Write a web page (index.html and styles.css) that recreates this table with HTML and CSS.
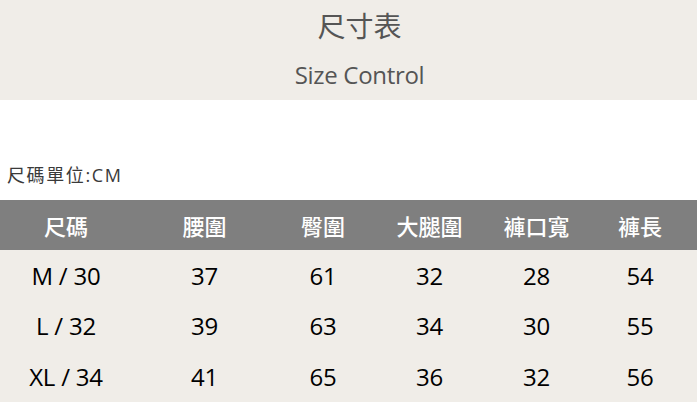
FILE: index.html
```html
<!DOCTYPE html>
<html lang="zh-Hant">
<head>
<meta charset="utf-8">
<title>尺寸表</title>
<link rel="stylesheet" href="styles.css">
</head>
<body>
<header class="banner">
  <h1 class="title">尺寸表</h1>
  <p class="subtitle">Size Control</p>
</header>
<p class="unit">尺碼單位:CM</p>
<div class="table">
  <div class="row head">
    <span>尺碼</span><span>腰圍</span><span>臀圍</span><span>大腿圍</span><span>褲口寬</span><span>褲長</span>
  </div>
  <div class="body">
    <div class="row">
      <span>M / 30</span><span>37</span><span>61</span><span>32</span><span>28</span><span>54</span>
    </div>
    <div class="row">
      <span>L / 32</span><span>39</span><span>63</span><span>34</span><span>30</span><span>55</span>
    </div>
    <div class="row">
      <span>XL / 34</span><span>41</span><span>65</span><span>36</span><span>32</span><span>56</span>
    </div>
  </div>
</div>
</body>
</html>
```
FILE: styles.css
```css
html, body {
  margin: 0;
  padding: 0;
  background: #ffffff;
}
body {
  width: 697px;
  height: 402px;
  overflow: hidden;
  font-family: "Open Sans", "Noto Sans CJK TC", sans-serif;
}
.banner {
  height: 100px;
  background: #f0ede8;
  display: flex;
  flex-direction: column;
  align-items: center;
  box-sizing: border-box;
  padding-top: 6px;
  padding-left: 22px;
}
.title {
  margin: 0;
  font-family: "Noto Sans CJK TC", sans-serif;
  font-weight: 400;
  font-size: 28px;
  line-height: 38px;
  color: #555555;
}
.subtitle {
  margin: 15px 0 0 0;
  font-family: "Open Sans", sans-serif;
  font-stretch: 92%;
  font-weight: 500;
  font-size: 24px;
  line-height: 32px;
  color: #555555;
  letter-spacing: -0.3px;
}
.unit {
  margin: 60px 0 0 7px;
  height: 40px;
  font-family: "Open Sans", "Noto Sans CJK TC", sans-serif;
  font-size: 18px;
  line-height: 30px;
  color: #3a3a3a;
  letter-spacing: 1.6px;
}
.table {
  display: flex;
  flex-direction: column;
}
.row {
  display: grid;
  grid-template-columns: 132px 145px 92px 121px 93px 114px;
  align-items: center;
  justify-items: center;
}
.head {
  height: 50px;
  background: #7f7f7f;
  color: #ffffff;
  font-family: "Noto Sans CJK TC", sans-serif;
  font-weight: 500;
  font-size: 22px;
}
.body {
  background: #f0ede8;
  height: 152px;
  display: grid;
  grid-template-rows: 50px 51px 51px;
}
.body .row {
  font-family: "Open Sans", sans-serif;
  font-weight: 500;
  font-stretch: 93%;
  font-size: 24px;
  color: #000000;
  letter-spacing: -0.2px;
}
```
